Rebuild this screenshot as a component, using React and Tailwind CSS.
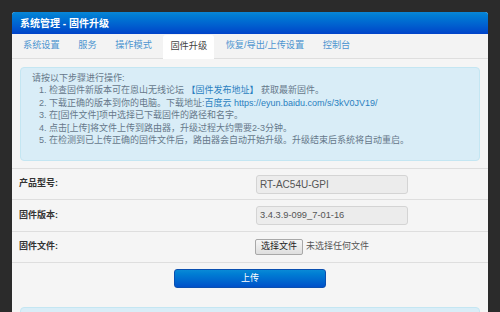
const tabs = ["系统设置", "服务", "操作模式", "固件升级", "恢复/导出/上传设置", "控制台"];

const FirmwareUpgrade = () => {
  const active = "固件升级";

  return (
    <div className="w-[500px] h-[312px] overflow-hidden bg-[#2b2b2b] pt-3 pl-3 font-['Liberation_Sans','Noto_Sans_CJK_SC',sans-serif]">
      <div className="w-[476px] h-[320px] bg-[#f5f5f5] rounded-t-[3px] overflow-hidden">
        {/* Header */}
        <div className="h-[22px] flex items-center px-2 bg-gradient-to-b from-[#0a86d6] to-[#0042c9] text-white text-[10px] font-bold">
          系统管理 - 固件升级
        </div>

        {/* Tabs */}
        <div className="h-[25px] flex items-end pl-[4px] bg-[#f3f3f3] border-b border-[#dedede]">
          {tabs.map((t) => (
            <div
              key={t}
              className={
                t === active
                  ? "h-[24px] -mb-px mr-[4.5px] px-[7px] flex items-center bg-white rounded-t-[3px] text-[9.2px] text-[#444]"
                  : "h-[24px] mr-[4.5px] px-[7px] flex items-center text-[9.2px] text-[#4d95d0]"
              }
            >
              {t}
            </div>
          ))}
        </div>

        {/* Instructions */}
        <div className="mx-2 mt-2 h-[94px] rounded-[4px] border border-[#c4e6f2] bg-[#d9edf7] pl-[11px] pt-[4px] text-[9px] leading-[12.4px] text-[#66788a]">
          <p>请按以下步骤进行操作:</p>
          <ol className="ml-[7px]">
            <li>
              1. 检查固件新版本可在恩山无线论坛{" "}
              <span className="text-[#2a7fc0]">【固件发布地址】</span> 获取最新固件。
            </li>
            <li>
              2. 下载正确的版本到你的电脑。下载地址:
              <span className="text-[#2a7fc0]">百度云 https://eyun.baidu.com/s/3kV0JV19/</span>
            </li>
            <li>3. 在[固件文件]项中选择已下载固件的路径和名字。</li>
            <li>4. 点击[上传]将文件上传到路由器，升级过程大约需要2-3分钟。</li>
            <li>5. 在检测到已上传正确的固件文件后，路由器会自动开始升级。升级结束后系统将自动重启。</li>
          </ol>
        </div>

        {/* Form */}
        <div className="mt-[7px] border-t border-[#dedede]">
          <div className="h-[31px] flex items-center border-b border-[#dedede]">
            <div className="w-[244px] pl-[7px] text-[9px] font-bold text-[#333]">产品型号:</div>
            <div className="w-[152px] h-[19px] flex items-center px-[3px] rounded-[3px] border border-[#d4d4d4] bg-[#ececec] text-[10px] text-[#555]">
              RT-AC54U-GPI
            </div>
          </div>
          <div className="h-[32px] flex items-center border-b border-[#dedede]">
            <div className="w-[244px] pl-[7px] text-[9px] font-bold text-[#333]">固件版本:</div>
            <div className="w-[152px] h-[19px] flex items-center px-[3px] rounded-[3px] border border-[#d4d4d4] bg-[#ececec] text-[9.3px] text-[#555]">
              3.4.3.9-099_7-01-16
            </div>
          </div>
          <div className="h-[31px] flex items-center border-b border-[#dedede]">
            <div className="w-[243px] pl-[7px] text-[9px] font-bold text-[#333]">固件文件:</div>
            <div className="h-[16px] w-[48px] flex items-center justify-center rounded-[2px] border border-[#a8a8a8] bg-gradient-to-b from-[#f6f6f6] to-[#dedede] text-[9px] text-[#222]">
              选择文件
            </div>
            <span className="ml-[3px] text-[9px] text-[#555]">未选择任何文件</span>
          </div>
        </div>

        {/* Upload */}
        <div className="flex justify-center mt-[6px]">
          <button className="w-[152px] h-[19px] rounded-[3px] border border-[#0a4fb0] bg-gradient-to-b from-[#0a8ad6] to-[#0050c9] text-[9px] text-white">
            上传
          </button>
        </div>

        <div className="mx-2 mt-[19px] h-[20px] rounded-[4px] border border-[#c4e6f2] bg-[#d9edf7]" />
      </div>
    </div>
  );
};

export default function App() {
  return <FirmwareUpgrade />;
}
